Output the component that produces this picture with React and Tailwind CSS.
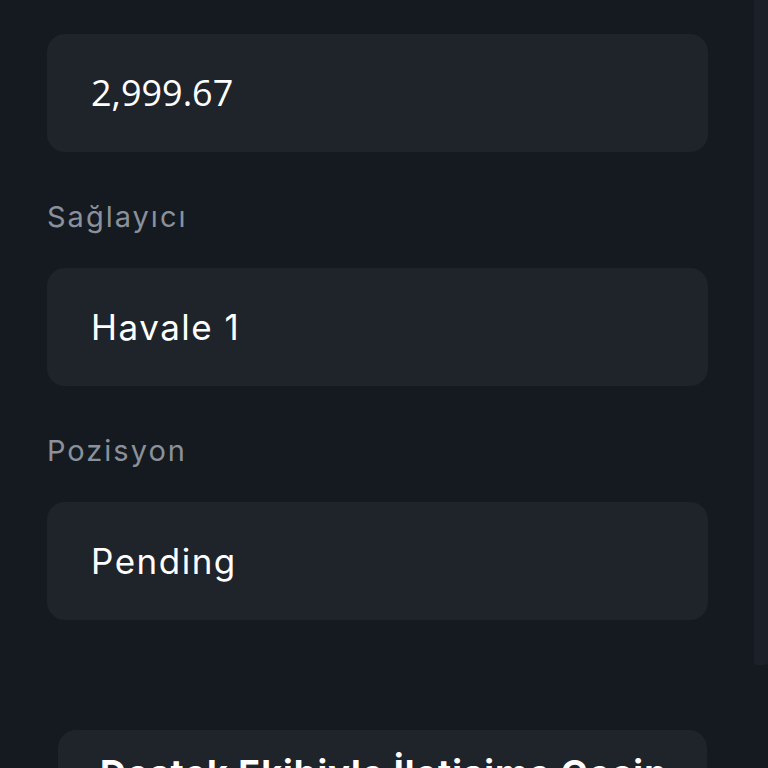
import React from "react";

const fields = [
  { label: null, value: "2,999.67", numeric: true },
  { label: "Sağlayıcı", value: "Havale 1" },
  { label: "Pozisyon", value: "Pending" },
];

const App = () => {
  return (
    <div className="relative h-[768px] w-[768px] overflow-hidden bg-[#151a21]" style={{ fontFamily: "Inter, 'Noto Sans', sans-serif" }}>
      <div className="flex flex-col pt-[34px] pl-[47px] pr-[60px]">
        {fields.map((f, i) => (
          <div key={i} className={i > 0 ? "mt-[48px]" : ""}>
            {f.label && (
              <div className="mb-[34px] h-[34px] text-[29px] leading-[34px] tracking-[2px] text-[#8a919b]">{f.label}</div>
            )}
            <div className="flex h-[118px] items-center rounded-[18px] bg-[#1f232a] px-[44px]">
              {f.numeric ? (
                <span className="text-[36px] text-white" style={{ fontFamily: "'Open Sans', sans-serif" }}>
                  {f.value}
                </span>
              ) : (
                <span className="text-[35px] font-normal tracking-[1.5px] text-white">{f.value}</span>
              )}
            </div>
          </div>
        ))}

        {/* support button, cut off by the viewport */}
        <div className="mt-[110px] ml-[11px] mr-[1px] flex h-[110px] items-start rounded-[18px] bg-[#1f232a] px-[42px] pt-[16px]">
          <span className="whitespace-nowrap text-[36px] font-bold tracking-[1px] text-white">Destek Ekibiyle İletişime Geçin</span>
        </div>
      </div>

      {/* scrollbar */}
      <div className="absolute right-0 top-0 h-[665px] w-[14px] rounded-b-[4px] bg-[#1c2129]" />
    </div>
  );
};

export default App;
